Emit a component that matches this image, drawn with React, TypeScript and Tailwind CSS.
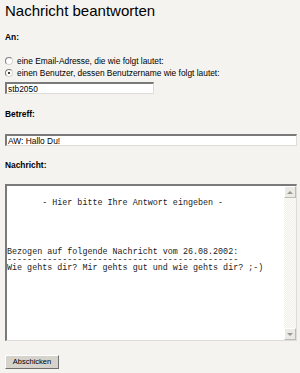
import React from "react";

function Radio({ checked }: { checked?: boolean }) {
  return (
    <span className="relative inline-block w-[8px] h-[8px] rounded-full bg-white border border-t-[#7d7d7d] border-l-[#7d7d7d] border-r-[#d8d6d0] border-b-[#d8d6d0] shrink-0">
      {checked && <span className="absolute left-[2px] top-[2px] w-[2px] h-[2px] rounded-full bg-black" />}
    </span>
  );
}

function TextInput({ value, width }: { value: string; width: string }) {
  return (
    <div
      className={`${width} h-[12px] bg-white border-t-2 border-l-2 border-[#7a7a7a] border-r border-b border-r-[#dedcd6] border-b-[#dedcd6] flex items-center pl-[1px] text-[8.4px] leading-[10px] text-black`}
    >
      {value}
    </div>
  );
}

const message = [
  "",
  "       - Hier bitte Ihre Antwort eingeben -",
  "",
  "",
  "",
  "",
  "",
  "Bezogen auf folgende Nachricht vom 26.08.2002:",
  "----------------------------------------------",
  "Wie gehts dir? Mir gehts gut und wie gehts dir? ;-)",
].join("\n");

export default function App() {
  return (
    <div className="w-[300px] h-[373px] bg-[#f4f3ef] px-[5px] overflow-hidden font-['Liberation_Sans',Arial,sans-serif] text-black">
      <h1 className="mt-[2px] h-[17px] text-[15px] leading-[17px] font-normal">Nachricht beantworten</h1>

      <div className="mt-[13px] h-[10px] text-[8.4px] leading-[10px] font-bold">An:</div>

      <div className="mt-[13px] flex flex-col text-[8.4px]">
        <label className="h-[12px] flex items-center gap-[4px]">
          <Radio />
          <span>eine Email-Adresse, die wie folgt lautet:</span>
        </label>
        <label className="h-[12px] flex items-center gap-[4px]">
          <Radio checked />
          <span>einen Benutzer, dessen Benutzername wie folgt lautet:</span>
        </label>
      </div>

      <div className="mt-[3px]">
        <TextInput value="stb2050" width="w-[149px]" />
      </div>

      <div className="mt-[15px] h-[10px] text-[8.4px] leading-[10px] font-bold">Betreff:</div>

      <div className="mt-[15px]">
        <TextInput value="AW: Hallo Du!" width="w-[292px]" />
      </div>

      <div className="mt-[14px] h-[10px] text-[8.4px] leading-[10px] font-bold">Nachricht:</div>

      <div className="mt-[14px] w-[292px] h-[157px] bg-white border-t-2 border-l-2 border-[#7a7a7a] border-r border-b border-r-[#dedcd6] border-b-[#dedcd6] flex">
        <div className="flex-1 pt-[5px] overflow-hidden whitespace-pre font-['Liberation_Mono','Courier_New',monospace] text-[8.4px] leading-[8.1px] text-[#1a1a1a]">
          {message}
        </div>
        <div className="w-[12px] flex flex-col bg-[repeating-conic-gradient(#f1f0ea_0%_25%,#fbfbf8_0%_50%)] bg-[length:2px_2px]">
          <div className="h-[12px] bg-[#ebeae4] border border-t-white border-l-white border-r-[#bdbbb4] border-b-[#bdbbb4] flex items-center justify-center">
            <span className="w-0 h-0 border-l-[3px] border-r-[3px] border-b-[3px] border-l-transparent border-r-transparent border-b-[#9a9890]" />
          </div>
          <div className="flex-1" />
          <div className="h-[12px] bg-[#ebeae4] border border-t-white border-l-white border-r-[#bdbbb4] border-b-[#bdbbb4] flex items-center justify-center">
            <span className="w-0 h-0 border-l-[3px] border-r-[3px] border-t-[3px] border-l-transparent border-r-transparent border-t-[#9a9890]" />
          </div>
        </div>
      </div>

      <button className="mt-[14px] w-[54px] h-[14px] bg-[#d6d3cc] border border-t-white border-l-white border-r-[#6f6f6f] border-b-[#6f6f6f] text-[7.5px] leading-[12px] text-black flex items-center justify-center">
        Abschicken
      </button>
    </div>
  );
}
